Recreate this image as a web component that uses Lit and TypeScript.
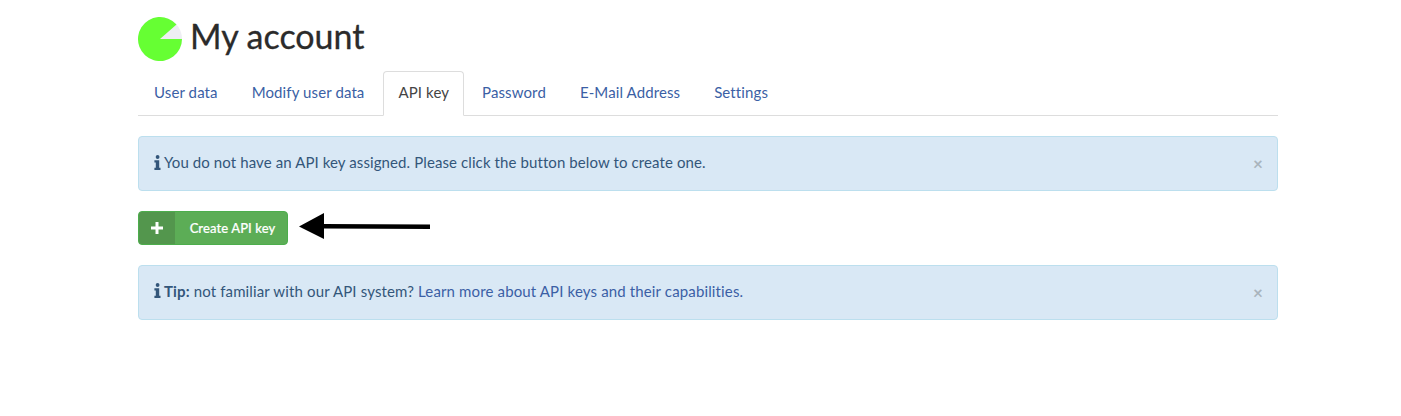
import { LitElement, html, css } from "lit";
import { customElement } from "lit/decorators.js";

const infoIcon = html`<svg class="info" viewBox="0 0 7 15" width="7" height="15">
  <circle cx="3.6" cy="2" r="1.9" fill="currentColor"></circle>
  <path d="M.4 5.2h4.8v7.6h1.3V15H.4v-2.2h1.4V7.4H.4z" fill="currentColor"></path>
</svg>`;

@customElement("app-root")
export class AppRoot extends LitElement {
  static styles = css`
    :host {
      display: block;
      height: 416px;
      background: #fff;
      font-family: Lato, "Open Sans", sans-serif;
      font-size: 15px;
      letter-spacing: 0.1px;
      color: #333;
    }
    .page {
      width: 1140px;
      margin-left: 138px;
      padding-top: 17px;
    }
    .head {
      display: flex;
      align-items: center;
      gap: 8px;
      height: 44px;
    }
    .head h1 {
      margin: 0 0 6px;
      font-size: 34px;
      font-weight: 400;
      letter-spacing: 0;
      line-height: 40px;
      color: #2b2b2b;
      -webkit-text-stroke: 0.3px #2b2b2b;
    }
    .tabs {
      box-sizing: border-box;
      display: flex;
      margin-top: 10px;
      height: 45px;
      border-bottom: 1px solid #ddd;
      letter-spacing: 0.11px;
    }
    .tab {
      box-sizing: border-box;
      height: 45px;
      padding: 10px 15px 0;
      margin-right: 2px;
      border: 1px solid transparent;
      border-radius: 4px 4px 0 0;
      color: #3b5fa5;
      line-height: 20px;
    }
    .tab.active {
      padding: 10px 14px 0;
      margin-left: 1px;
      background: #fff;
      border-color: #ddd;
      border-bottom-color: #fff;
      color: #444;
    }
    .alert {
      box-sizing: border-box;
      display: flex;
      align-items: center;
      height: 55px;
      padding: 0 15px;
      background: #d9e8f5;
      border: 1px solid #bcdfee;
      border-radius: 4px;
      color: #33567a;
    }
    .first { margin-top: 20px; }
    .msg { flex: 1; margin-bottom: 3px; }
    .info { margin-right: 3px; margin-bottom: 3px; flex: none; }
    .tip .msg { letter-spacing: 0.14px; }
    .tip .info { margin-bottom: 4px; }
    .msg a { color: #3b5fa5; text-decoration: none; }
    .close {
      font-size: 17px;
      font-weight: 700;
      color: #a9b4bd;
      line-height: 1;
      margin-right: -1px;
    }
    .action {
      display: flex;
      align-items: flex-start;
      gap: 11px;
      margin: 20px 0;
      height: 34px;
    }
    .btn {
      box-sizing: border-box;
      display: flex;
      width: 150px;
      height: 34px;
      border: 1px solid #4cae4c;
      border-radius: 4px;
      background: #5cad56;
      color: #fff;
      overflow: hidden;
      font-size: 13px;
      font-weight: 500;
    }
    .btn .plus {
      display: flex;
      align-items: center;
      justify-content: center;
      width: 36px;
      background: #53964d;
      flex: none;
    }
    .btn .label {
      flex: 1;
      padding-left: 3px;
      text-align: center;
      line-height: 32px;
      -webkit-text-stroke: 0.2px #fff;
    }
    .arrow { margin-top: 2px; }
  `;

  render() {
    return html`
      <div class="page">
        <div class="head">
          <svg width="44" height="44" viewBox="0 0 44 44">
            <circle cx="22" cy="22" r="22" fill="#eeeef3"></circle>
            <path d="M22 22 L38.5 7.5 A22 22 0 1 0 44 22 Z" fill="#66ff33"></path>
          </svg>
          <h1>My account</h1>
        </div>
        <div class="tabs">
          <div class="tab">User data</div>
          <div class="tab">Modify user data</div>
          <div class="tab active">API key</div>
          <div class="tab">Password</div>
          <div class="tab">E-Mail Address</div>
          <div class="tab">Settings</div>
        </div>
        <div class="alert first">
          ${infoIcon}
          <span class="msg">You do not have an API key assigned. Please click the button below to create one.</span>
          <span class="close">×</span>
        </div>
        <div class="action">
          <div class="btn">
            <span class="plus">
              <svg width="12" height="12" viewBox="0 0 12 12"><path d="M6 0v12M0 6h12" stroke="#fff" stroke-width="3"></path></svg>
            </span>
            <span class="label">Create API key</span>
          </div>
          <svg class="arrow" width="131" height="26" viewBox="0 0 131 26">
            <path d="M0 13.5 L25 0 V11 L131 11.5 V16 L25 15.5 V26 Z" fill="#000"></path>
          </svg>
        </div>
        <div class="alert tip">
          ${infoIcon}
          <span class="msg"><b>Tip:</b> not familiar with our API system? <a>Learn more about API keys and their capabilities.</a></span>
          <span class="close">×</span>
        </div>
      </div>
    `;
  }
}
